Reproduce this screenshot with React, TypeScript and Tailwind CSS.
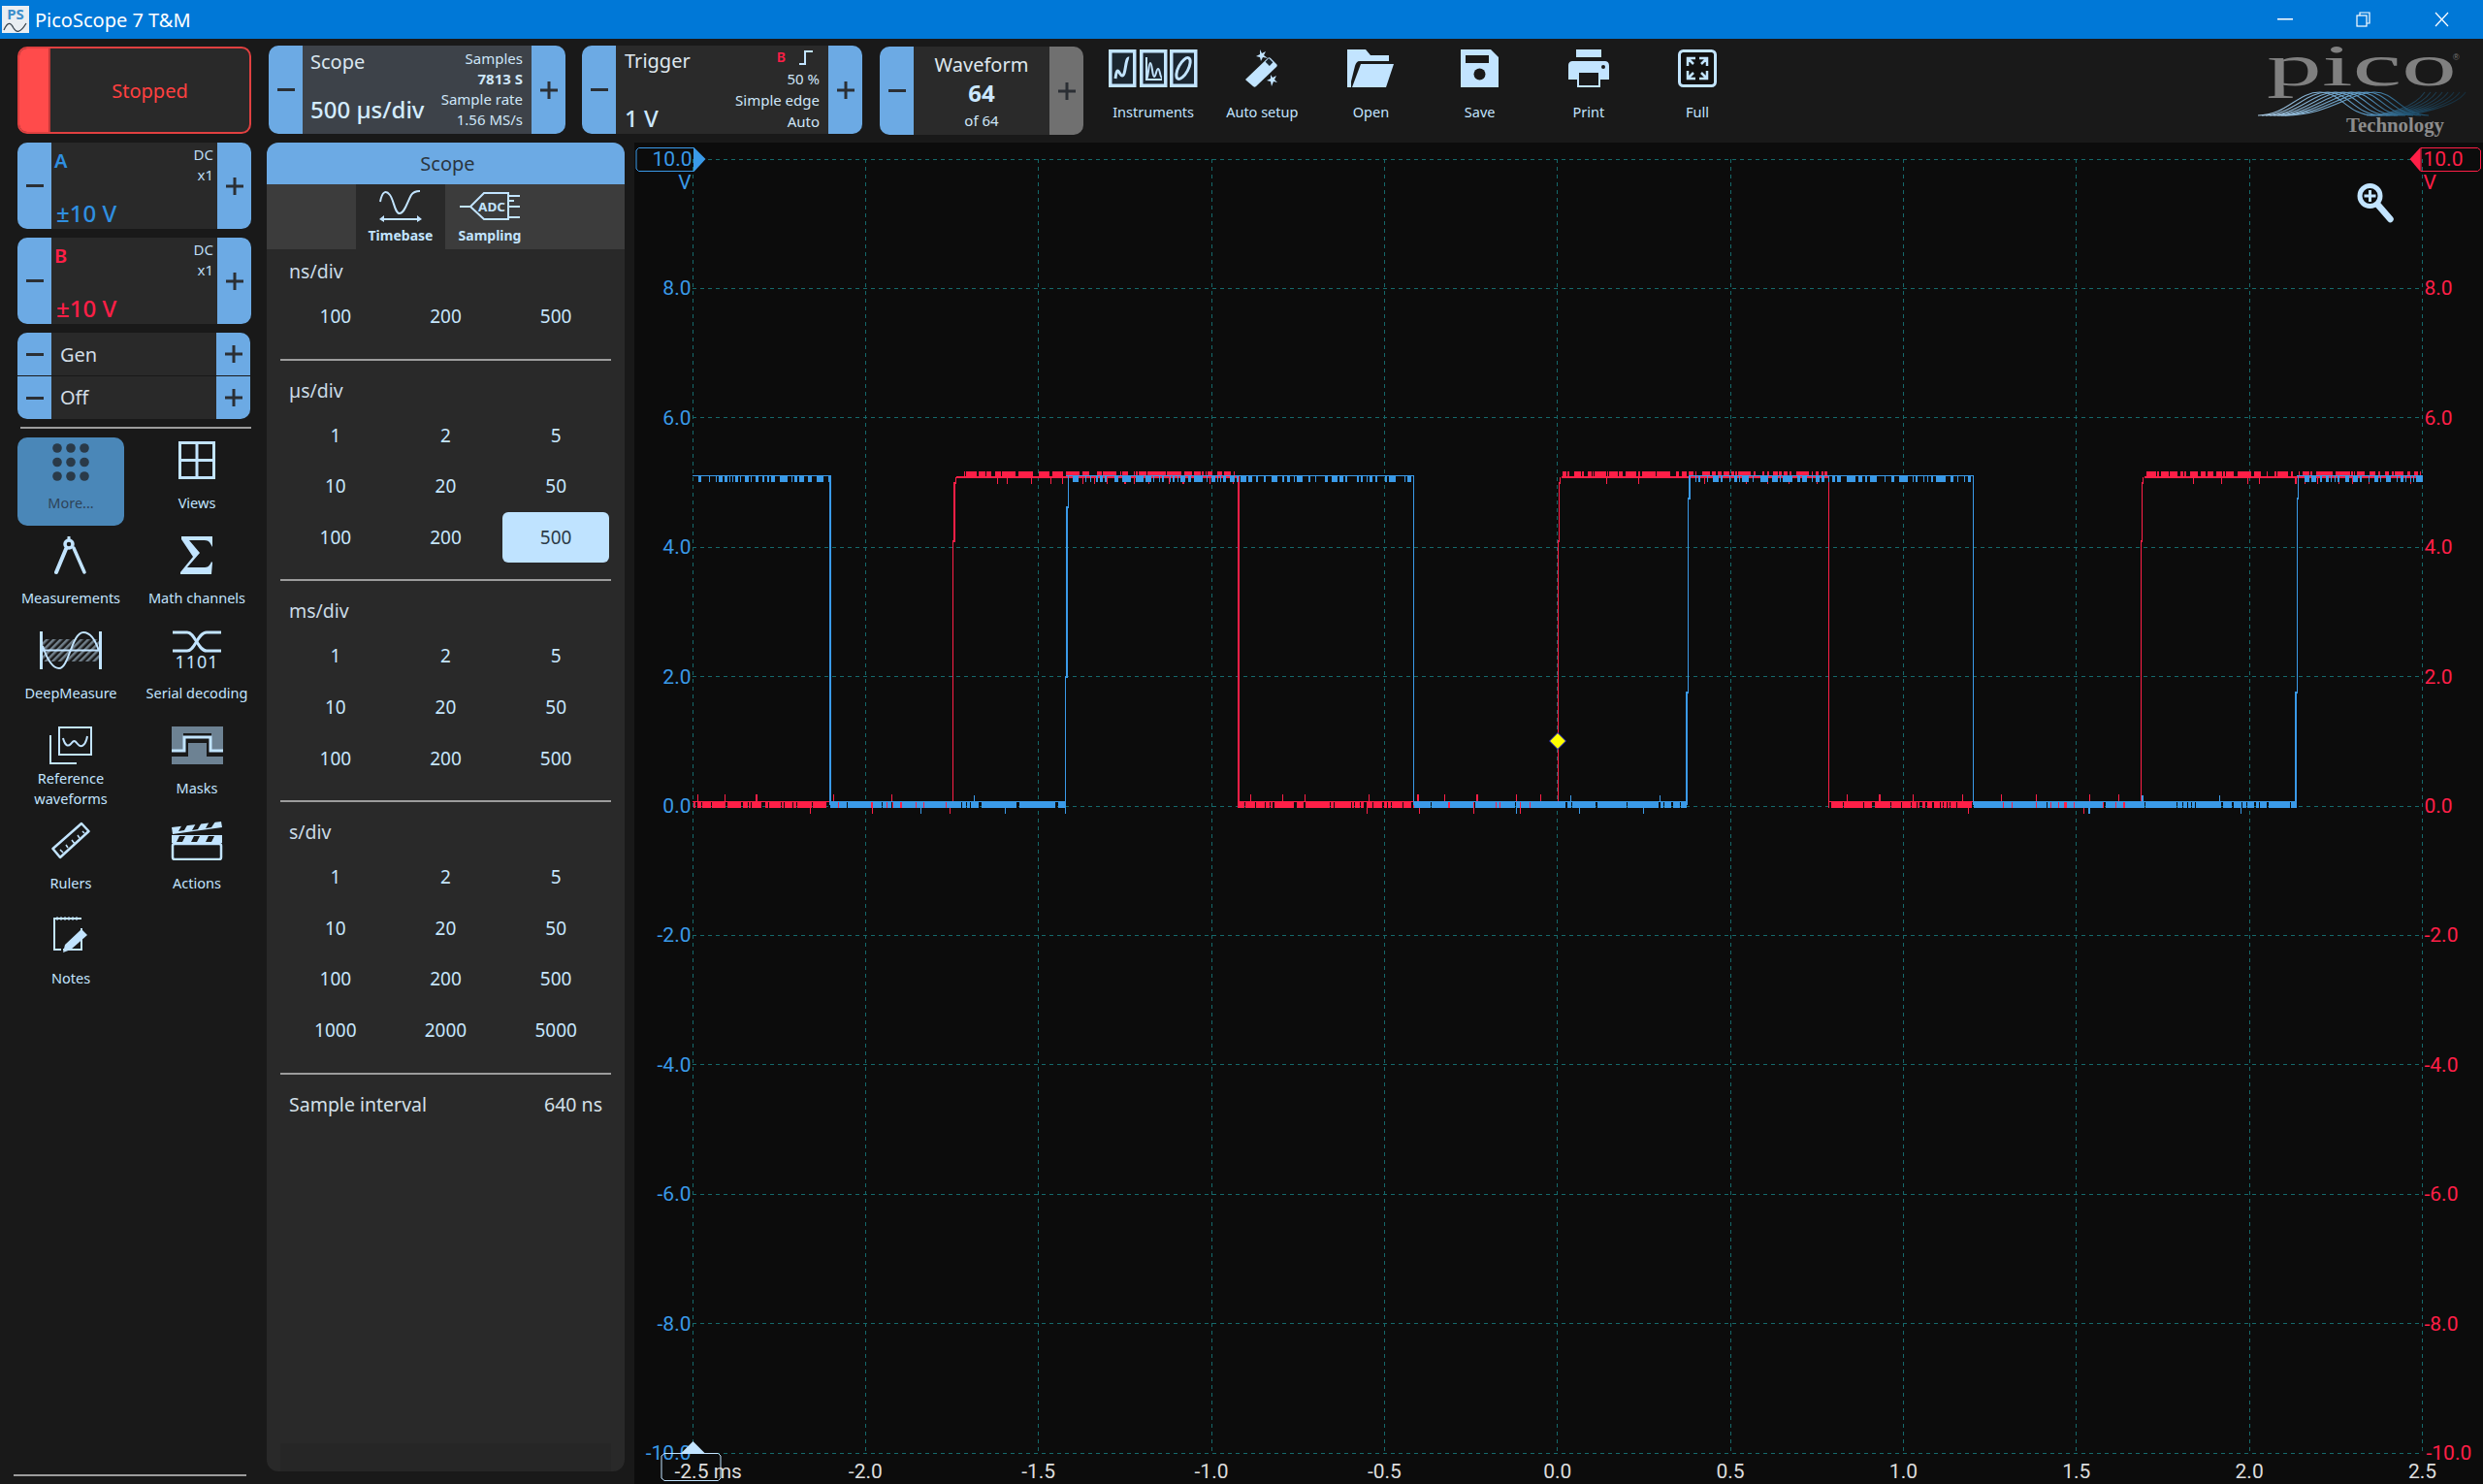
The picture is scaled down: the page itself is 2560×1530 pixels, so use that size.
import React from "react";

const C = "#c2e4ff";
const BLUE = "#3a9ae8";
const RED = "#ff1f47";

function rng(seed: number) {
  let s = seed * 7919;
  return () => {
    s = (s * 1664525 + 1013904223) % 4294967296;
    return s / 4294967296;
  };
}

function bars(x0: number, x1: number, y: number, h: number, minGap: number, maxGap: number, minW: number, maxW: number, seed: number) {
  const r = rng(seed);
  let d = "";
  let x = x0 + Math.floor(r() * maxGap);
  while (x < x1) {
    const w = Math.min(minW + Math.floor(r() * r() * (maxW - minW + 1)), x1 - x);
    d += `M${x} ${y}h${w}v${h}h${-w}z`;
    x += w + minGap + Math.floor(r() * r() * (maxGap - minGap + 1));
  }
  return d;
}

const blueHigh = [[714, 856], [1099, 1458], [1741, 2035], [2368, 2498]];
const blueLow = [[856, 1099], [1458, 1739], [2035, 2368]];
const redHigh = [[983, 1277], [1607, 1886], [2208, 2498]];
const redLow = [[714, 983], [1277, 1607], [1886, 2208]];

function Traces() {
  let redD = "";
  let blueD = "";
  redHigh.forEach(([a, b], i) => {
    redD += bars(a + 4, b - 2, 486, 6, 1, 8, 1, 20, 11 + i);
    redD += `M${a + 3} 491h${b - a - 3}v1.5h${-(b - a - 3)}z`;
    redD += bars(a + 4, b - 2, 493, 6, 8, 60, 1, 2, 21 + i);
  });
  redLow.forEach(([a, b], i) => {
    redD += bars(a, b, 826, 7, 1, 4, 2, 30, 31 + i);
    redD += `M${a} 825.5h${b - a}v1.5h${-(b - a)}z`;
    redD += bars(a, b, 819, 7, 20, 90, 1, 2, 41 + i);
    redD += bars(a, b, 833, 6, 40, 160, 1, 1, 51 + i);
  });
  blueHigh.forEach(([a, b], i) => {
    blueD += bars(a + 2, b, 490, 7, 2, 10, 1, 12, 61 + i);
    blueD += `M${a} 489.5h${b - a}v1.5h${-(b - a)}z`;
  });
  blueLow.forEach(([a, b], i) => {
    blueD += bars(a, b, 826, 7, 1, 3, 3, 40, 71 + i);
    blueD += `M${a} 825.5h${b - a}v1.5h${-(b - a)}z`;
    blueD += bars(a, b, 820, 6, 50, 180, 1, 2, 81 + i);
    blueD += bars(a, b, 833, 6, 60, 180, 1, 2, 91 + i);
  });
  return (
    <g shapeRendering="crispEdges">
      <path d={redD} fill={RED} />
      <path d="M983 833V558H984.5V498H986V491.5" fill="none" stroke={RED} strokeWidth="1.5" />
      <path d="M1607 833V558H1608V498H1609V491.5" fill="none" stroke={RED} strokeWidth="1.5" />
      <path d="M2208 833V558H2209V498H2210V491.5" fill="none" stroke={RED} strokeWidth="1.5" />
      <path d="M1277.5 491V833M1886 491V833" fill="none" stroke={RED} strokeWidth="1.5" />
      <path d={blueD} fill={BLUE} />
      <path d="M1099 830V698H1100.5V523H1102V490M1739.5 830V714H1741V514H1742.5V490M2367.5 830V714H2369V514H2370V490" fill="none" stroke={BLUE} strokeWidth="1.5" />
      <path d="M856.5 490V830M1458 490V830M2035 490V830" fill="none" stroke={BLUE} strokeWidth="1.5" />
    </g>
  );
}

function Graph() {
  const xs = Array.from({ length: 11 }, (_, i) => 714.5 + 178.35 * i);
  const ys = Array.from({ length: 11 }, (_, i) => 164 + 133.4 * i);
  const volts = ["8.0", "6.0", "4.0", "2.0", "0.0", "-2.0", "-4.0", "-6.0", "-8.0"];
  const times = ["-2.0", "-1.5", "-1.0", "-0.5", "0.0", "0.5", "1.0", "1.5", "2.0", "2.5"];
  const font = "Roboto, sans-serif";
  return (
    <div className="flex-1 h-full bg-[#0c0c0c]">
      <svg className="block w-full h-full" viewBox="655 147 1905 1383" fontFamily={font} fontSize="21">
        <g stroke="#15696b" strokeWidth="1" strokeDasharray="4 4" shapeRendering="crispEdges">
          {xs.map((x) => (
            <line key={x} x1={x} x2={x} y1={164} y2={1498} />
          ))}
          {ys.map((y) => (
            <line key={y} x1={714} x2={2498} y1={y} y2={y} />
          ))}
        </g>
        <Traces />
        {volts.map((v, i) => (
          <React.Fragment key={v}>
            <text x={713} y={164 + 133.4 * (i + 1) + 7} textAnchor="end" fill={BLUE}>{v}</text>
            <text x={2500} y={164 + 133.4 * (i + 1) + 7} fill={RED}>{v}</text>
          </React.Fragment>
        ))}
        {times.map((t, i) => (
          <text key={t} x={714.5 + 178.35 * (i + 1)} y={1524} textAnchor="middle" fill="#dddddd">{t}</text>
        ))}
        <text x={713} y={1505} textAnchor="end" fill={BLUE}>-10.0</text>
        <text x={2502} y={1505} fill={RED}>-10.0</text>
        <path d="M659 152.5H716V176.5H659L656.5 174V155Z" fill="none" stroke={BLUE} />
        <path d="M716 152L728 164L716 177Z" fill={BLUE} />
        <text x={714} y={171} textAnchor="end" fill={BLUE}>10.0</text>
        <text x={713} y={195} textAnchor="end" fill={BLUE}>V</text>
        <path d="M2496.5 152.5H2555L2558 155V174L2555 176.5H2496.5Z" fill="none" stroke={RED} />
        <path d="M2496 152L2485 164L2496 177Z" fill={RED} />
        <text x={2499} y={171} fill={RED}>10.0</text>
        <text x={2499} y={195} fill={RED}>V</text>
        <path d="M685.5 1498.5H741L743.5 1501V1524L741 1526.5H685.5L682.5 1524V1501Z" fill="none" stroke={C} />
        <path d="M703 1498L715 1486L727 1498Z" fill={C} />
        <text x={696} y={1524} fill="#dddddd">-2.5 ms</text>
        <path d="M1606.5 755.5L1615 764L1606.5 772.5L1598 764Z" fill="#ffff00" stroke="#1010d0" />
        <g fill="none" stroke={C}>
          <circle cx={2444} cy={202} r={10.5} strokeWidth={5} />
          <path d="M2452 211L2465 226" strokeWidth={6.5} strokeLinecap="round" />
          <path d="M2444 196V208M2438 202H2450" strokeWidth={3} />
        </g>
      </svg>
    </div>
  );
}

function Minus() {
  return <span className="block w-[18px] h-[3px] bg-[#2b2f34]" />;
}
function Plus() {
  return (
    <svg width="18" height="18" viewBox="0 0 18 18" fill="#2b2f34">
      <rect x="7.5" width="3" height="18" />
      <rect y="7.5" width="18" height="3" />
    </svg>
  );
}

function SpinBlock({ center, className, plusGray }: { center: React.ReactNode; className: string; plusGray?: boolean }) {
  return (
    <div className={`flex rounded-[10px] overflow-hidden ${className}`}>
      <div className="w-[35px] shrink-0 flex items-center justify-center bg-[#6caae4]"><Minus /></div>
      {center}
      <div className={`w-[35px] shrink-0 flex items-center justify-center ${plusGray ? "bg-[#707070]" : "bg-[#6caae4]"}`}><Plus /></div>
    </div>
  );
}

function Channel({ name, color, mt }: { name: string; color: string; mt: string }) {
  return (
    <SpinBlock
      className={`${mt} ml-[18px] w-[241px] h-[89px]`}
      center={
        <div className="flex-1 bg-[#292929] flex flex-col pl-[3px] pr-[4px]">
          <div className="flex justify-between">
            <span className={`text-[20px] leading-[26px] mt-[6px] font-semibold ${color}`}>{name}</span>
            <div className="text-right text-[15px] leading-[21px] text-[#bcdcf3] pt-[2px]">
              <div>DC</div>
              <div>x1</div>
            </div>
          </div>
          <span className={`mt-auto mb-[1px] ml-[2px] text-[24px] leading-[30px] font-medium ${color}`}>±10 V</span>
        </div>
      }
    />
  );
}

function GenRow({ label, pt }: { label: string; pt: string }) {
  return (
    <div className="flex h-[44px]">
      <div className="w-[35px] flex items-center justify-center bg-[#6caae4]"><Minus /></div>
      <div className={`flex-1 bg-[#292929] pl-[9px] text-[20px] leading-[44px] text-[#d2dde5] ${pt}`}>{label}</div>
      <div className="w-[35px] flex items-center justify-center bg-[#6caae4]"><Plus /></div>
    </div>
  );
}

const IconMore = () => (
  <svg width="42" height="39" viewBox="0 0 42 39" fill="#2a3a48">
    {[5, 19.5, 34].map((y) => [7, 21, 35].map((x) => <circle key={`${x}${y}`} cx={x} cy={y} r="4.8" />))}
  </svg>
);
const IconViews = () => (
  <svg width="38" height="39" viewBox="0 0 38 39" fill="none" stroke={C} strokeWidth="3">
    <rect x="1.5" y="1.5" width="35" height="36" />
    <path d="M19 1.5V37.5M1.5 19.5H36.5" />
  </svg>
);
const IconMeasure = () => (
  <svg width="34" height="40" viewBox="0 0 34 40" fill="none" stroke={C}>
    <circle cx="15" cy="8" r="4" strokeWidth="3.5" />
    <path d="M12 13L2 37" strokeWidth="4" strokeLinecap="round" />
    <path d="M20 12L31 37" strokeWidth="3.5" strokeLinecap="round" />
    <path d="M15 0V4" strokeWidth="3" />
  </svg>
);
const IconSigma = () => (
  <svg width="34" height="39" viewBox="0 0 34 39" fill={C}>
    <path d="M1 0H33V11L30 6C28 4 26 4 22 4H9L20 17L7 32H24C28 32 30 31 32 26L33 27L32 39H0V37L13 21L1 3Z" />
  </svg>
);
const IconDeep = () => (
  <svg width="64" height="39" viewBox="0 0 64 39" fill="none">
    <defs>
      <pattern id="hatch" width="5" height="5" patternUnits="userSpaceOnUse" patternTransform="rotate(45)">
        <rect width="2.5" height="5" fill="#71808b" />
      </pattern>
    </defs>
    <rect x="3" y="8" width="58" height="23" fill="url(#hatch)" />
    <path d="M1.5 0V39M62.5 0V39" stroke={C} strokeWidth="3" />
    <path d="M2 19.5H62" stroke={C} strokeWidth="2" />
    <path d="M3 15C8 30 13 38 20 38C30 38 33 1 45 1C52 1 57 8 61 20" stroke={C} strokeWidth="2" />
  </svg>
);
const IconSerial = () => (
  <svg width="52" height="41" viewBox="0 0 52 41" fill="none" stroke={C} strokeWidth="3" className="overflow-visible">
    <path d="M1 2H16C24 2 27 21 36 21H51" />
    <path d="M1 21H16C24 21 27 2 36 2H51" />
    <text x="26" y="39" textAnchor="middle" fontSize="18" fill={C} stroke="none" fontFamily="'Noto Sans', sans-serif" letterSpacing="1">1101</text>
  </svg>
);
const IconRef = () => (
  <svg width="44" height="39" viewBox="0 0 44 39" fill="none" stroke={C} strokeWidth="2">
    <path d="M1 9V38H28" />
    <rect x="10" y="1" width="33" height="28" strokeWidth="2" />
    <path d="M14 12C16 20 19 21 22 18C25 14 26 14 29 18C32 22 37 21 39 10" />
  </svg>
);
const IconMask = () => (
  <svg width="53" height="39" viewBox="0 0 53 39">
    <rect width="53" height="39" fill="#6d8293" />
    <path d="M0 25H12V7H41V25H53V31H0Z" fill="#191919" />
    <path d="M17 31V17H36V31Z" fill="#6d8293" />
    <path d="M0 25H13V11H40V25H53" fill="none" stroke={C} strokeWidth="3" />
  </svg>
);
const IconRuler = () => (
  <svg width="40" height="40" viewBox="0 0 40 40" fill="none" stroke={C} strokeWidth="2.5">
    <path d="M1.5 28L31 2L38.5 10L9 37Z" strokeLinejoin="round" />
    <path d="M9 29L12 32M15 24L17 27M21 19L24 23M27 14L29 17M32 10L34 12" strokeWidth="1.5" />
  </svg>
);
const IconClap = () => (
  <svg width="54" height="40" viewBox="0 0 54 40" fill={C}>
    <path d="M1 6L52 0L53 6L2 13Z" />
    <path d="M1 14H53V22H1Z" />
    <rect x="2" y="23" width="50" height="16" rx="2" fill="none" stroke={C} strokeWidth="2.5" />
    <path d="M12 3L18 2L14 9L8 10ZM26 2L32 1L28 8L22 9ZM40 0L46 0L42 6L36 7ZM9 15H15L12 21H6ZM24 15H30L27 21H21ZM39 15H45L42 21H36Z" fill="#191919" />
  </svg>
);
const IconNotes = () => (
  <svg width="36" height="40" viewBox="0 0 36 40" fill="none" stroke={C} strokeWidth="2">
    <path d="M29 12V34H10M8 34H1V2H29" />
    <path d="M4 0V4M8 0V4M12 0V4M16 0V4M20 0V4M24 0V4" strokeWidth="1" />
    <path d="M10 37L12 29L29 13L35 19L18 34Z" fill={C} stroke="none" />
  </svg>
);

function Tool({ label, icon, mt = "mt-[14px]", active }: { label: React.ReactNode; icon: React.ReactNode; mt?: string; active?: boolean }) {
  return (
    <div className="flex flex-col items-center">
      <div className="h-[39px] mt-[6px] flex items-center justify-center">{icon}</div>
      <div className={`${mt} text-center text-[14.5px] leading-[21px] ${active ? "text-[#2e4358]" : "text-[#c2e4ff]"}`}>{label}</div>
    </div>
  );
}

function Sidebar() {
  return (
    <div className="w-[275px] shrink-0 flex flex-col h-full">
      <div className="mt-[8px] ml-[18px] w-[241px] h-[90px] rounded-[10px] border-2 border-[#e04040] bg-[#292929] overflow-hidden flex">
        <div className="w-[32px] bg-[#ff4b4b] border-r-2 border-[#c23838]" />
        <div className="flex-1 flex items-center justify-center pt-[2px] text-[20px] text-[#ff4040]">Stopped</div>
      </div>
      <Channel name="A" color="text-[#2f8fe0]" mt="mt-[9px]" />
      <Channel name="B" color="text-[#ff1f47]" mt="mt-[9px]" />
      <div className="mt-[9px] ml-[18px] w-[240px] rounded-[10px] overflow-hidden flex flex-col gap-[1px]">
        <GenRow label="Gen" pt="pt-[1px]" />
        <GenRow label="Off" pt="" />
      </div>
      <div className="mt-[8px] ml-[21px] w-[238px] h-[2px] bg-[#9c9c9c]" />
      <div className="mt-[7px] ml-[8px] w-[260px] grid grid-cols-2 auto-rows-[98px]">
        <div className="mx-[10px] mt-[2px] h-[91px] rounded-[10px] bg-[#4a87b8]">
          <Tool label="More..." icon={<IconMore />} active mt="mt-[12px]" />
        </div>
        <Tool label="Views" icon={<IconViews />} />
        <Tool label="Measurements" icon={<IconMeasure />} />
        <Tool label="Math channels" icon={<IconSigma />} />
        <Tool label="DeepMeasure" icon={<IconDeep />} />
        <Tool label="Serial decoding" icon={<IconSerial />} />
        <Tool label={<>Reference<br />waveforms</>} icon={<IconRef />} mt="mt-[4px]" />
        <Tool label="Masks" icon={<IconMask />} />
        <Tool label="Rulers" icon={<IconRuler />} />
        <Tool label="Actions" icon={<IconClap />} />
        <Tool label="Notes" icon={<IconNotes />} />
      </div>
      <div className="mt-auto mb-[8px] ml-[14px] w-[240px] h-[2px] bg-[#9c9c9c]" />
    </div>
  );
}

const IconInstruments = () => (
  <svg width="92" height="39" viewBox="0 0 92 39" fill="none" stroke={C}>
    <g strokeWidth="3.5">
      <rect x="1.75" y="1.75" width="25" height="35.5" fill="#1b2630" />
      <rect x="33.75" y="1.75" width="25" height="35.5" fill="#1b2630" />
      <rect x="64.75" y="1.75" width="25" height="35.5" fill="#1b2630" />
    </g>
    <path d="M7 30C9 14 11 27 14 27C18 27 17 8 21 9" strokeWidth="3" />
    <path d="M39 8V31H55M39 31C41 31 41 14 43 14C45 14 45 28 47 28C49 28 49 20 51 20C53 20 53 29 55 29" strokeWidth="2" />
    <ellipse cx="77" cy="19.5" rx="5" ry="12" transform="rotate(28 77 19.5)" strokeWidth="3" />
  </svg>
);
const IconAuto = () => (
  <svg width="34" height="39" viewBox="0 0 34 39" fill={C}>
    <path d="M1 30L23 9C24 8 25 8 26 9L32 15C33 16 33 17 32 18L11 38C10 39 9 39 8 38L1 32C0 31 0 31 1 30Z" />
    <rect x="21.5" y="10.5" width="6" height="5" transform="rotate(45 24.5 13)" fill="#1b2630" />
    <path d="M15 0L17 4L21 2L19 6L23 9L18 8L16 12L15 8L11 7L15 5Z" />
    <path d="M26 26L28 29L32 27L30 31L33 34L29 33L27 38L26 33L22 32L26 30Z" />
  </svg>
);
const IconOpen = () => (
  <svg width="48" height="39" viewBox="0 0 48 39" fill={C}>
    <path d="M0 0H19L24 6H43V12H13C10 12 9 14 8 17L4 33V39H0Z" />
    <path d="M14 15H48L40 39H5Z" />
  </svg>
);
const IconSave = () => (
  <svg width="39" height="39" viewBox="0 0 39 39">
    <path d="M0 0H31L39 8V39H0Z" fill={C} />
    <rect x="5" y="6" width="24" height="8" fill="#191919" />
    <circle cx="19.5" cy="25.5" r="6" fill="#191919" />
  </svg>
);
const IconPrint = () => (
  <svg width="42" height="39" viewBox="0 0 42 39" fill={C}>
    <rect x="8" width="26" height="8" />
    <path d="M0 17C0 13 2 12 5 12H37C40 12 42 13 42 17V31H33V23H9V31H0Z" />
    <rect x="10" y="23" width="22" height="15" fill="none" stroke={C} strokeWidth="2" />
    <circle cx="36" cy="18" r="2" fill="#191919" />
  </svg>
);
const IconFull = () => (
  <svg width="40" height="39" viewBox="0 0 40 39" fill="none" stroke={C}>
    <rect x="1.5" y="1.5" width="37" height="36" rx="4" strokeWidth="3" fill="#111" />
    <path d="M10 17V9H18M10 9L16 15M30 17V9H22M30 9L24 15M10 22V30H18M10 30L16 24M30 22V30H22M30 30L24 24" strokeWidth="2.5" />
  </svg>
);

function TopTool({ icon, label }: { icon: React.ReactNode; label: string }) {
  return (
    <div className="w-[112.2px] shrink-0 flex flex-col items-center">
      <div className="h-[39px] mt-[4px] flex items-center justify-center">{icon}</div>
      <div className="mt-[15px] text-[14.5px] leading-[21px] text-[#c2e4ff]">{label}</div>
    </div>
  );
}

function Logo() {
  const curves = [0, 1, 2, 3, 4, 5, 6, 7];
  return (
    <svg width="232" height="104" viewBox="2328 40 232 104" className="block shrink-0">
      <defs>
        <linearGradient id="wave" x1="2328" x2="2545" y1="0" y2="0" gradientUnits="userSpaceOnUse">
          <stop offset="0" stopColor="#a9c8e0" />
          <stop offset="0.5" stopColor="#5b97c2" />
          <stop offset="0.7" stopColor="#235a7c" />
          <stop offset="1" stopColor="#123347" />
        </linearGradient>
      </defs>
      <text x="2337" y="88" fontFamily="'Liberation Serif', serif" fontSize="62" fill="#808080" textLength="196" lengthAdjust="spacingAndGlyphs">pico</text>
      <text x="2529" y="62" fontFamily="'Liberation Sans', sans-serif" fontSize="9" fill="#777777">®</text>
      <g fill="none" stroke="url(#wave)" strokeWidth="1.1">
        {curves.map((i) => (
          <path key={i} d={`M${2328 + i * 4} 119C${2358 + i * 6} 119 ${2368 + i * 8} 95 ${2392 + i * 8} 95C${2414 + i * 8} 95 ${2420 + i * 8} 119 ${2448 + i * 8} 119`} />
        ))}
        {curves.map((i) => (
          <path key={i} d={`M${2440 + i * 4} 119C${2462 + i * 4} 119 ${2490 + i * 6} 110 ${2500 + i * 6} 95`} strokeOpacity="0.7" />
        ))}
      </g>
      <text x="2419" y="136" fontFamily="'Liberation Serif', serif" fontWeight="700" fontSize="20" fill="#8c8c8c" textLength="101" lengthAdjust="spacingAndGlyphs">Technology</text>
    </svg>
  );
}

function Toolbar() {
  return (
    <div className="h-[107px] shrink-0 flex items-start pt-[7px] pl-[2px]">
      <SpinBlock
        className="w-[306px] h-[91px] shrink-0"
        center={
          <div className="flex-1 bg-[#3d4249] flex justify-between pl-[8px] pr-[9px]">
            <div className="flex flex-col justify-between pt-[4px] pb-[10px]">
              <span className="text-[20px] leading-[26px] text-[#dbe7ef]">Scope</span>
              <span className="text-[24px] leading-[30px] font-medium text-[#d3ecff] whitespace-nowrap">500 µs/div</span>
            </div>
            <div className="text-right text-[15px] leading-[21px] pt-[3px] text-[#cfe6f8]">
              <div>Samples</div>
              <div className="font-bold">7813 S</div>
              <div>Sample rate</div>
              <div>1.56 MS/s</div>
            </div>
          </div>
        }
      />
      <SpinBlock
        className="ml-[17px] w-[289px] h-[91px] shrink-0"
        center={
          <div className="flex-1 bg-[#2a2a2a] flex justify-between pl-[9px] pr-[9px]">
            <div className="flex flex-col justify-between pt-[3px] pb-[1px]">
              <span className="text-[20px] leading-[26px] text-[#dfe8ee]">Trigger</span>
              <span className="text-[24px] leading-[30px] font-medium text-[#cbe8ff]">1 V</span>
            </div>
            <div className="text-right text-[15px] leading-[22px] pt-[1px] text-[#cfe6f8]">
              <div className="flex justify-end items-center gap-[14px] h-[22px] pr-[7px]">
                <span className="text-[#ff1f47] text-[14px] font-semibold">B</span>
                <svg width="14" height="15" viewBox="0 0 14 15" fill="none" stroke={C} strokeWidth="2"><path d="M0 14H6V1H14" /></svg>
              </div>
              <div>50 %</div>
              <div>Simple edge</div>
              <div>Auto</div>
            </div>
          </div>
        }
      />
      <SpinBlock
        plusGray
        className="ml-[18px] mt-[1px] w-[210px] h-[91px] shrink-0"
        center={
          <div className="flex-1 bg-[#2a2a2a] flex flex-col items-center pt-[6px]">
            <span className="text-[20px] leading-[26px] text-[#dfe8ee]">Waveform</span>
            <span className="text-[24px] leading-[32px] font-bold text-[#cbe8ff]">64</span>
            <span className="text-[15px] leading-[24px] text-[#cfe6f8]">of 64</span>
          </div>
        }
      />
      <div className="ml-[16px] flex">
        <TopTool icon={<IconInstruments />} label="Instruments" />
        <TopTool icon={<IconAuto />} label="Auto setup" />
        <TopTool icon={<IconOpen />} label="Open" />
        <TopTool icon={<IconSave />} label="Save" />
        <TopTool icon={<IconPrint />} label="Print" />
        <TopTool icon={<IconFull />} label="Full" />
      </div>
      <div className="ml-auto -mt-[7px]"><Logo /></div>
    </div>
  );
}

function Cell({ v, selected }: { v: string; selected?: boolean }) {
  return (
    <div className={`h-[52.6px] flex items-center justify-center text-[19px] ${selected ? "bg-[#bfe3ff] rounded-md text-[#2b3a47] mx-[2px]" : "text-[#c6e6fd]"}`}>{v}</div>
  );
}

function Section({ label, rows, sel, first }: { label: string; rows: string[][]; sel?: string; first?: boolean }) {
  return (
    <div className="px-[14px]">
      <div className={`${first ? "h-[43px] pt-[12px]" : "h-[51px] pt-[20px]"} pl-[9px] text-[19.5px] leading-[22px] text-[#cbdbe6]`}>{label}</div>
      <div className="grid grid-cols-3">
        {rows.flat().map((v, i) => (
          <Cell key={i} v={v} selected={v === sel} />
        ))}
      </div>
      <div className="mt-[17px] h-[2px] bg-[#9c9c9c]" />
    </div>
  );
}

function Panel() {
  return (
    <div className="w-[369px] shrink-0 mr-[10px] h-[1370px] rounded-[12px] overflow-hidden bg-[#292929] flex flex-col">
      <div className="h-[43px] shrink-0 bg-[#6caae4] flex items-center justify-center pl-[4px] text-[20px] text-[#2a3540]">Scope</div>
      <div className="h-[67px] shrink-0 bg-[#3c3c3c] flex pl-[92px]">
        <div className="w-[92px] bg-[#292929] flex flex-col items-center pt-[6px]">
          <svg width="44" height="33" viewBox="0 0 44 33" fill="none" stroke={C}>
            <path d="M1 12C3 1 7 0 11 5C15 10 16 24 21 24C26 24 29 12 33 5C35 2 37 1 42 1" strokeWidth="2" />
            <path d="M3 30H41" strokeWidth="2" />
            <path d="M0 30L5 26V33ZM44 30L39 26V33Z" fill={C} stroke="none" />
          </svg>
          <span className="mt-[4px] text-[14px] leading-[20px] font-bold text-[#c2e4ff]">Timebase</span>
        </div>
        <div className="w-[92px] flex flex-col items-center pt-[6px]">
          <svg width="62" height="33" viewBox="0 0 62 33" fill="none" stroke={C} strokeWidth="2">
            <path d="M0 17H11L25 3H50V30H25L11 17" />
            <path d="M50 6H62M50 17H62M50 28H62M50 11H56" />
            <text x="33" y="22" textAnchor="middle" fontSize="13" fontWeight="700" fill={C} stroke="none" fontFamily="'Noto Sans', sans-serif" textLength="28" lengthAdjust="spacingAndGlyphs">ADC</text>
          </svg>
          <span className="mt-[4px] text-[14px] leading-[20px] font-bold text-[#c2e4ff]">Sampling</span>
        </div>
      </div>
      <Section first label="ns/div" rows={[["100", "200", "500"]]} />
      <Section label="µs/div" sel="500" rows={[["1", "2", "5"], ["10", "20", "50"], ["100", "200", "500"]]} />
      <Section label="ms/div" rows={[["1", "2", "5"], ["10", "20", "50"], ["100", "200", "500"]]} />
      <Section label="s/div" rows={[["1", "2", "5"], ["10", "20", "50"], ["100", "200", "500"], ["1000", "2000", "5000"]]} />
      <div className="mx-[14px] pl-[9px] pr-[9px] pt-[20px] flex justify-between text-[19.5px] leading-[22px] text-[#d4e0e8]">
        <span>Sample interval</span>
        <span>640 ns</span>
      </div>
      <div className="mt-auto mx-[14px] h-[29px] bg-[#262626]" />
    </div>
  );
}

function TitleBar() {
  return (
    <div className="h-10 shrink-0 bg-[#0078d7] flex items-center text-white">
      <div className="ml-[2px] w-[28px] h-[28px] bg-[#e9eef2] flex flex-col items-center">
        <span className="text-[15px] leading-[16px] font-bold text-[#3d8ecb]">PS</span>
        <svg width="26" height="12" viewBox="0 0 26 12" fill="none" stroke="#3b4650" strokeWidth="1.3">
          <path d="M1 9C5 0 8 1 11 7C14 12 18 12 24 2" />
        </svg>
      </div>
      <span className="ml-[6px] pt-[2px] text-[20px]">PicoScope 7 T&amp;M</span>
      <div className="ml-auto mr-[35px] flex items-center">
        <svg width="16" height="2" viewBox="0 0 16 2" fill="white"><rect width="16" height="1.5" /></svg>
        <svg className="ml-[65px]" width="15" height="16" viewBox="0 0 15 16" fill="none" stroke="white" strokeWidth="1.2">
          <rect x="1" y="4" width="10" height="11" />
          <path d="M4 4V1H14V12H11" />
        </svg>
        <svg className="ml-[66px]" width="15" height="16" viewBox="0 0 15 16" fill="none" stroke="white" strokeWidth="1.2">
          <path d="M1 1L14 15M14 1L1 15" />
        </svg>
      </div>
    </div>
  );
}

export default function App() {
  return (
    <div className="w-[2560px] h-[1530px] flex flex-col overflow-hidden bg-[#191919] font-['Noto_Sans',sans-serif]">
      <TitleBar />
      <div className="flex-1 flex min-h-0">
        <Sidebar />
        <div className="flex-1 min-w-0 flex flex-col">
          <Toolbar />
          <div className="flex-1 min-h-0 flex">
            <Panel />
            <Graph />
          </div>
        </div>
      </div>
    </div>
  );
}
